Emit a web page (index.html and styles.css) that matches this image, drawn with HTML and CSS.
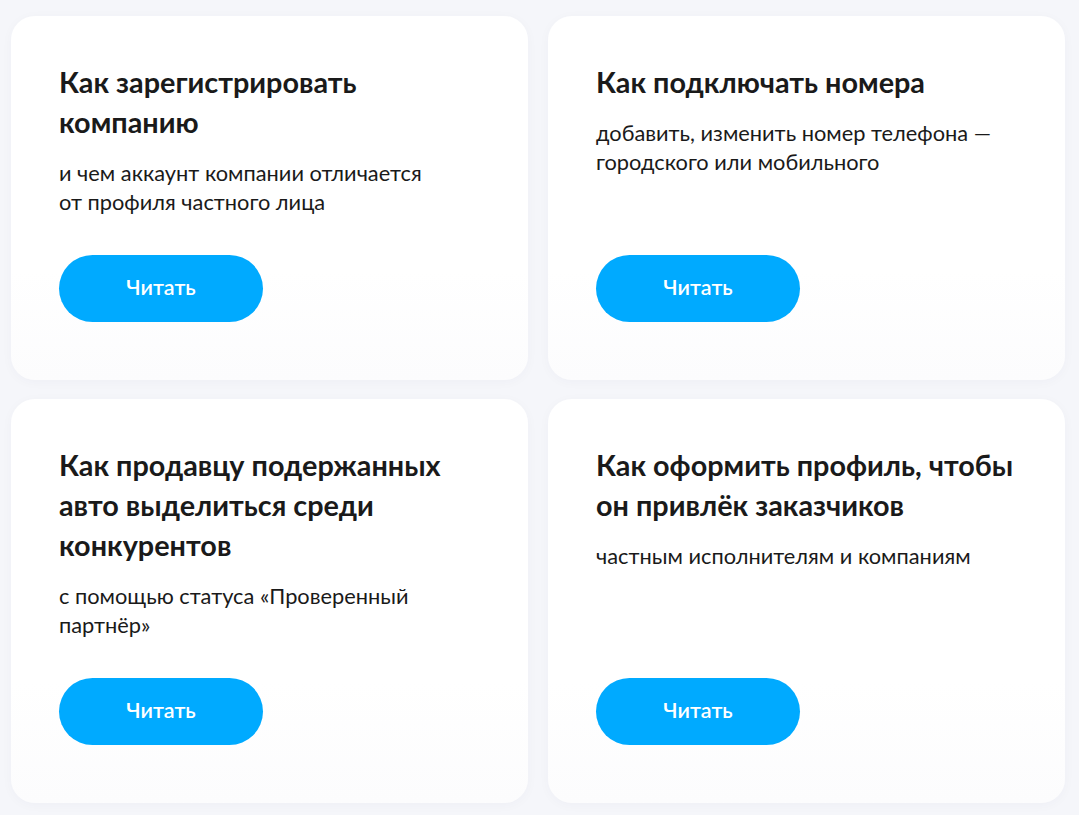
FILE: index.html
```html
<!DOCTYPE html>
<html lang="ru">
<head>
  <meta charset="UTF-8" />
  <meta name="viewport" content="width=device-width, initial-scale=1" />
  <title>Статьи</title>
  <link rel="stylesheet" href="styles.css">
</head>
<body>
  <div class="grid">
    <div class="card">
      <h3>Как зарегистрировать компанию</h3>
      <p>и чем аккаунт компании отличается<br>от профиля частного лица</p>
      <a class="btn" href="#">Читать</a>
    </div>

    <div class="card">
      <h3>Как подключать номера</h3>
      <p>добавить, изменить номер телефона —<br>городского или мобильного</p>
      <a class="btn" href="#">Читать</a>
    </div>

    <div class="card">
      <h3>Как продавцу подержанных авто выделиться среди конкурентов</h3>
      <p>с помощью статуса «Проверенный<br>партнёр»</p>
      <a class="btn" href="#">Читать</a>
    </div>

    <div class="card">
      <h3>Как оформить профиль, чтобы он привлёк заказчиков</h3>
      <p>частным исполнителям и компаниям</p>
      <a class="btn" href="#">Читать</a>
    </div>
  </div>
</body>
</html>
```

FILE: styles.css
```css
* {
  box-sizing: border-box;
}

body {
  margin: 0;
  font-family: Lato, "Liberation Sans", sans-serif;
  background-color: #f5f6fa;
  color: #1a1a1a;
}

.grid {
  display: grid;
  grid-template-columns: 517px 517px;
  gap: 19px 20px;
  padding: 16px 11px;
}

.card {
  display: flex;
  flex-direction: column;
  align-items: flex-start;
  background: linear-gradient(180deg, #ffffff 70%, #fcfcfd 100%);
  border-radius: 24px;
  padding: 46px 48px 58px;
  box-shadow: 0 2px 12px rgba(30, 40, 90, 0.03);
}

.card h3 {
  margin: 0;
  font-size: 28.8px;
  line-height: 40px;
  font-weight: 700;
}

.card p {
  margin: 16px 0 39px;
  font-size: 21.8px;
  line-height: 29px;
}

.btn {
  margin-top: auto;
  display: flex;
  align-items: center;
  justify-content: center;
  width: 204px;
  height: 67px;
  padding-bottom: 4px;
  border-radius: 34px;
  background-color: #00aaff;
  color: #ffffff;
  font-size: 21.5px;
  font-weight: 600;
  text-decoration: none;
}
```
